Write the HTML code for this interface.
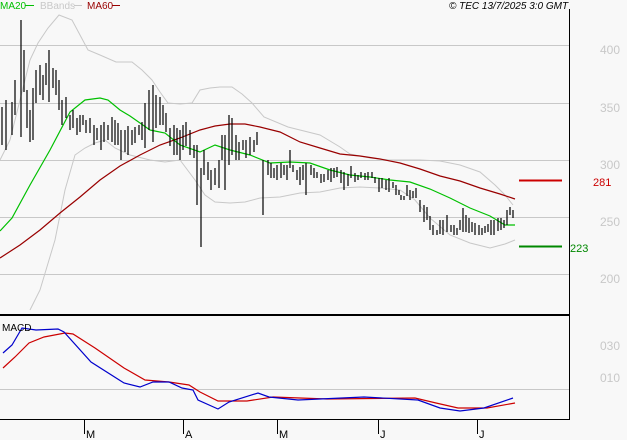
<!DOCTYPE html>
<html><head><meta charset="utf-8"><style>
html,body{margin:0;padding:0;background:#f8f8f8;}
svg{display:block;font-family:"Liberation Sans",sans-serif;}
</style></head><body>
<svg width="627" height="440" viewBox="0 0 627 440" xmlns="http://www.w3.org/2000/svg">
<rect width="627" height="440" fill="#f8f8f8"/>
<g stroke="#c8c8c8" stroke-width="1">
<line x1="0" y1="45.5" x2="569" y2="45.5"/>
<line x1="0" y1="103.5" x2="569" y2="103.5"/>
<line x1="0" y1="160.5" x2="569" y2="160.5"/>
<line x1="0" y1="217.5" x2="569" y2="217.5"/>
<line x1="0" y1="274.5" x2="569" y2="274.5"/>
<line x1="0" y1="389.5" x2="569" y2="389.5"/>
</g>
<g font-size="12" fill="#c8c8c8">
<text x="600" y="54">400</text><text x="600" y="112">350</text>
<text x="600" y="169">300</text><text x="600" y="226">250</text>
<text x="600" y="283">200</text>
<text x="600" y="350">030</text><text x="600" y="382">010</text>
</g>
<!-- bollinger -->
<polyline fill="none" stroke="#c8c8c8" points="0,160 10,140 20,100 30,60 38,43 48,28 59,15 72,20 80,35 88,50 100,55 116,62 132,62 142,70 152,80 160,92 168,103 180,104 192,103 200,90 210,88 220,87 232,87 242,94 252,103 264,117 288,127 320,135 340,147 350,154 370,158 390,160 420,160 440,161 460,165 480,172 495,185 505,195 513,205"/>
<polyline fill="none" stroke="#c8c8c8" points="30,310 40,290 55,240 65,190 75,155 85,148 95,143 105,140 115,148 130,155 150,160 165,162 180,160 195,180 205,195 215,202 230,203 245,202 260,198 280,197 290,195 300,193 320,192 340,188 360,187 380,188 400,190 415,200 430,218 450,235 470,243 490,248 505,244 515,240"/>
<!-- MA50 -->
<polyline fill="none" stroke="#990000" stroke-width="1.2" points="0,258 20,245 40,230 60,213 80,197 100,180 120,166 140,155 160,145 180,138 200,130 215,126 230,124 245,124 260,127 280,132 300,142 320,148 340,154 360,156 380,159 400,163 420,169 440,176 460,181 480,188 500,194 515,199"/>
<!-- MA20 -->
<polyline fill="none" stroke="#00c000" stroke-width="1.2" points="0,231 12,218 30,185 50,150 70,112 85,100 100,98 108,100 120,110 130,116 150,130 165,133 180,145 200,152 215,145 230,150 250,155 270,163 290,162 310,163 330,170 350,175 370,177 390,180 410,182 430,189 450,198 470,208 490,216 505,225 515,225"/>
<!-- bars -->
<path fill="none" stroke="#000" stroke-width="1.2" d="M2 107V145M6 100V150M12 102V135M15 80V115M21 20V137M24 50V92M27 90V128M30 110V142M33 88V140M36 70V103M40 65V95M43 75V100M46 63V85M49 50V102M53 68V88M56 70V95M59 80V110M62 100V125M66 97V118M70 115V130M73 110V128M77 118V135M80 115V132M83 115V125M86 120V133M90 118V133M94 125V145M97 128V140M101 125V150M104 122V142M108 125V140M112 117V142M115 120V145M118 123V145M121 130V160M125 130V152M128 126V155M132 130V145M135 127V143M139 125V135M142 122V140M145 103V148M149 90V130M153 85V142M156 95V128M160 97V125M163 105V125M166 113V132M170 128V146M174 125V155M177 128V155M180 130V160M183 125V150M186 122V146M190 130V155M194 145V158M197 145V205M201 168V247M204 150V175M208 162V180M211 170V190M215 168V185M219 160V188M222 135V160M225 135V190M229 115V165M232 118V155M236 135V160M239 142V160M243 140V150M246 140V158M250 137V155M254 140V152M257 132V145M263 160V215M268 160V175M271 163V178M274 168V178M277 165V180M281 163V178M284 165V175M287 165V180M290 150V168M293 165V172M297 170V180M300 167V185M303 165V180M306 163V195M311 165V175M314 168V178M317 172V178M321 174V183M324 174V182M328 170V180M331 168V182M334 168V178M337 167V177M341 170V183M344 172V190M348 174V186M351 166V178M355 173V182M358 175V180M361 172V178M365 173V180M368 172V180M372 172V178M375 177V183M379 178V192M382 178V188M386 180V190M389 178V192M393 182V188M396 185V195M399 190V195M401 195V200M404 196V200M407 185V196M410 190V200M413 191V198M416 188V198M420 200V212M424 205V222M427 207V220M430 216V230M433 225V235M437 230V235M440 220V234M443 220V235M447 215V232M451 225V232M454 225V235M457 228V235M460 220V230M463 208V232M466 215V232M469 218V233M472 222V232M475 223V235M479 225V235M482 228V235M485 226V233M488 224V232M491 220V235M494 220V235M498 218V231M501 218V230M504 220V228M507 210V225M510 207V215M513 210V218"/>
<!-- targets -->
<line x1="519" y1="180.5" x2="562" y2="180.5" stroke="#cc0000" stroke-width="2"/>
<line x1="519" y1="246.5" x2="562" y2="246.5" stroke="#008800" stroke-width="2"/>
<text x="593" y="186" font-size="11" fill="#cc0000">281</text>
<text x="570" y="252" font-size="11" fill="#008800">223</text>
<!-- frames -->
<line x1="569.5" y1="9" x2="569.5" y2="420" stroke="#000"/>
<line x1="0" y1="315" x2="570" y2="315" stroke="#000" stroke-width="2"/>
<line x1="0" y1="419.5" x2="570" y2="419.5" stroke="#000"/>
<!-- MACD -->
<polyline fill="none" stroke="#cc0000" stroke-width="1.2" points="3,368 15,357 29,343 44,337 65,333 73,334 95,348 124,368 145,380 169,382 189,385 200,392 218,401 247,401 273,397 327,399 415,398 436,403 458,408 487,408 515,403"/>
<polyline fill="none" stroke="#0000cc" stroke-width="1.2" points="3,353 12,345 22,328 36,330 58,329 64,332 91,362 124,383 140,387 153,382 169,382 182,388 193,390 198,400 218,409 229,402 258,393 269,397 298,400 364,397 418,400 440,408 460,411 484,408 513,398"/>
<text x="2" y="331" font-size="10" fill="#000">MACD</text>
<!-- x axis -->
<g stroke="#000"><line x1="84.5" y1="419" x2="84.5" y2="434"/><line x1="183.5" y1="419" x2="183.5" y2="434"/><line x1="277.5" y1="419" x2="277.5" y2="434"/><line x1="378.5" y1="419" x2="378.5" y2="434"/><line x1="477.5" y1="419" x2="477.5" y2="434"/></g>
<g font-size="11" fill="#000"><text x="86" y="438">M</text><text x="185" y="438">A</text><text x="279" y="438">M</text><text x="380" y="438">J</text><text x="479" y="438">J</text></g>
<!-- legend -->
<text x="0" y="9" font-size="10" fill="#00c000">MA20</text><line x1="25" y1="5.5" x2="34" y2="5.5" stroke="#00c000"/>
<text x="40" y="9" font-size="10" fill="#c8c8c8">BBands</text><line x1="74" y1="5.5" x2="82" y2="5.5" stroke="#c8c8c8"/>
<text x="87" y="9" font-size="10" fill="#990000">MA60</text><line x1="112" y1="5.5" x2="120" y2="5.5" stroke="#990000"/>
<text x="449" y="9" font-size="10" font-style="italic" fill="#000">© TEC 13/7/2025 3:0 GMT</text>
</svg>
</body></html>
